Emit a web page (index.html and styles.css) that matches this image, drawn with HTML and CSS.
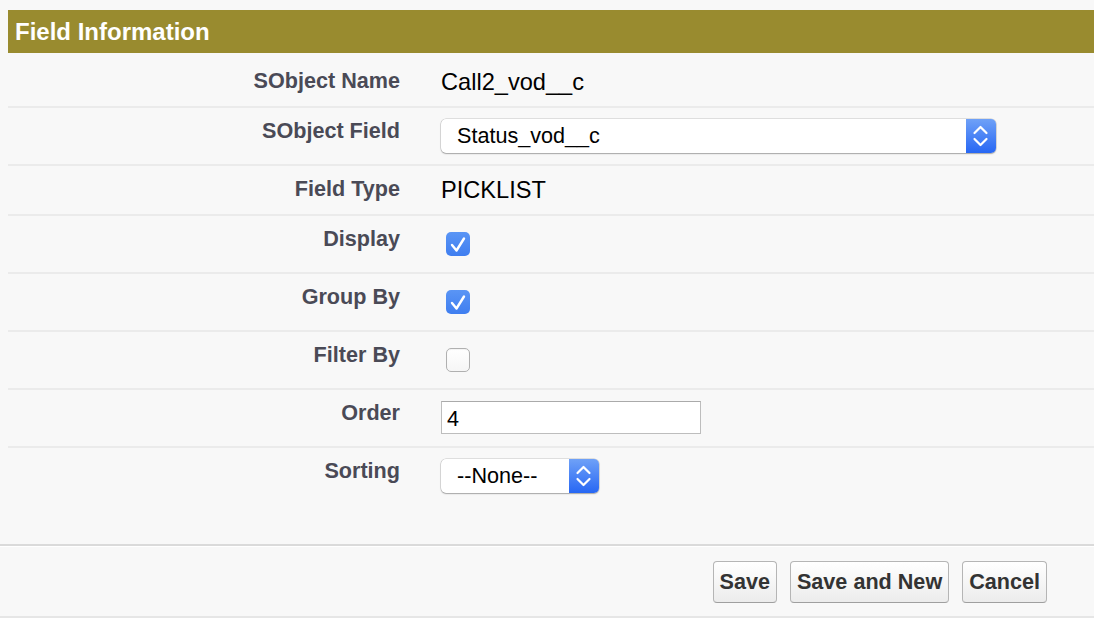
FILE: index.html
```html
<!DOCTYPE html>
<html lang="en">
<head>
<meta charset="utf-8">
<title>Field Information</title>
<link rel="stylesheet" href="styles.css">
</head>
<body>
<div class="page">
  <div class="section">
    <h3 class="section-title">Field Information</h3>
    <div class="form">
      <div class="row row-first">
        <div class="label">SObject Name</div>
        <div class="value text">Call2_vod__c</div>
      </div>
      <div class="row">
        <div class="label">SObject Field</div>
        <div class="value">
          <div class="select select-wide">
            <span class="select-text">Status_vod__c</span>
            <span class="select-arrows"><svg width="30" height="34" viewBox="0 0 30 34"><path d="M8.5 14 L14.5 8 L20.5 14 M8.5 20 L14.5 26 L20.5 20" fill="none" stroke="#fff" stroke-width="2.2" stroke-linecap="round" stroke-linejoin="round"/></svg></span>
          </div>
        </div>
      </div>
      <div class="row">
        <div class="label">Field Type</div>
        <div class="value text">PICKLIST</div>
      </div>
      <div class="row">
        <div class="label">Display</div>
        <div class="value"><span class="checkbox checked"><svg width="24" height="24" viewBox="0 0 24 24"><path d="M6 13 L10.5 18.5 L18 6.5" fill="none" stroke="#fff" stroke-width="2.4" stroke-linecap="round" stroke-linejoin="round"/></svg></span></div>
      </div>
      <div class="row">
        <div class="label">Group By</div>
        <div class="value"><span class="checkbox checked"><svg width="24" height="24" viewBox="0 0 24 24"><path d="M6 13 L10.5 18.5 L18 6.5" fill="none" stroke="#fff" stroke-width="2.4" stroke-linecap="round" stroke-linejoin="round"/></svg></span></div>
      </div>
      <div class="row">
        <div class="label">Filter By</div>
        <div class="value"><span class="checkbox"></span></div>
      </div>
      <div class="row">
        <div class="label">Order</div>
        <div class="value"><input class="text-input" type="text" value="4"></div>
      </div>
      <div class="row row-last">
        <div class="label">Sorting</div>
        <div class="value">
          <div class="select select-small">
            <span class="select-text">--None--</span>
            <span class="select-arrows"><svg width="30" height="34" viewBox="0 0 30 34"><path d="M8.5 14 L14.5 8 L20.5 14 M8.5 20 L14.5 26 L20.5 20" fill="none" stroke="#fff" stroke-width="2.2" stroke-linecap="round" stroke-linejoin="round"/></svg></span>
          </div>
        </div>
      </div>
    </div>
  </div>
  <div class="footer">
    <div class="buttons">
      <button class="btn" type="button">Save</button>
      <button class="btn" type="button">Save and New</button>
      <button class="btn" type="button">Cancel</button>
    </div>
  </div>
</div>
</body>
</html>
```

FILE: styles.css
```css
html, body {
  margin: 0;
  padding: 0;
  background: #ffffff;
  font-family: "Liberation Sans", Arial, sans-serif;
}

.page {
  background: #f8f8f8;
  padding-top: 10px;
}

.section {
  margin-left: 8px;
  margin-bottom: 40px;
}

.section-title {
  margin: 0;
  height: 43px;
  box-sizing: border-box;
  background: #998b2f;
  color: #ffffff;
  font-size: 24px;
  font-weight: bold;
  line-height: 26px;
  padding: 9px 0 0 7px;
}

.row {
  display: grid;
  grid-template-columns: 410px 1fr;
  padding: 11px 0;
  border-bottom: 2px solid #ebebeb;
}

.row-first {
  padding-top: 16px;
}

.row-last {
  border-bottom: none;
}

.label {
  padding-right: 18px;
  text-align: right;
  font-size: 21.6px;
  font-weight: bold;
  line-height: 24px;
  color: #4a4a56;
}

.value {
  padding-left: 23px;
  display: flex;
  align-items: flex-start;
}

.value.text {
  font-size: 23.6px;
  line-height: 26px;
  color: #000000;
}

.select {
  display: flex;
  height: 34px;
  border-radius: 5px;
  background: #ffffff;
  box-shadow: 0 0 0 0.5px rgba(0, 0, 0, 0.2), 0 1px 1.5px rgba(0, 0, 0, 0.26);
  overflow: hidden;
}

.select-wide {
  width: 555px;
}

.select-small {
  width: 158px;
}

.select-text {
  flex: 1;
  padding-left: 16px;
  font-size: 21.6px;
  line-height: 34px;
  color: #000000;
  white-space: nowrap;
}

.select-arrows {
  width: 30px;
  height: 34px;
  background: linear-gradient(#6fa1f7, #2767f4);
  display: block;
}

.select-arrows svg {
  display: block;
}

.checkbox {
  display: block;
  width: 24px;
  height: 24px;
  margin: 5px 0 5px 5px;
  box-sizing: border-box;
  border-radius: 5px;
  background: linear-gradient(#ffffff, #f6f6f6);
  border: 1px solid #b0b0b0;
  box-shadow: inset 0 1px 1px rgba(0, 0, 0, 0.05);
}

.checkbox.checked {
  border: none;
  background: linear-gradient(#5a95f5, #3f7ef0);
  box-shadow: none;
}

.checkbox svg {
  display: block;
}

.text-input {
  width: 260px;
  height: 33px;
  margin: 0 0 1px 0;
  box-sizing: border-box;
  border: 1px solid #bdbdbd;
  border-top-color: #aaaaaa;
  border-radius: 0;
  background: #ffffff;
  padding: 2px 5px 0;
  font-family: "Liberation Sans", Arial, sans-serif;
  font-size: 21.6px;
  color: #000000;
  outline: none;
}

.footer {
  border-top: 2px solid #dadada;
  border-bottom: 2px solid #e6e6e6;
  box-shadow: inset 0 1px 0 #ffffff;
  padding: 15px 47px 13px 0;
}

.buttons {
  display: flex;
  justify-content: flex-end;
  gap: 13px;
}

.btn {
  height: 42px;
  box-sizing: border-box;
  padding: 0 6px;
  border: 1px solid #b5b5b5;
  border-bottom-color: #9f9f9f;
  border-radius: 4px;
  background: linear-gradient(#ffffff, #ececec);
  font-family: "Liberation Sans", Arial, sans-serif;
  font-size: 21.6px;
  font-weight: bold;
  color: #333333;
  line-height: 40px;
}
```
